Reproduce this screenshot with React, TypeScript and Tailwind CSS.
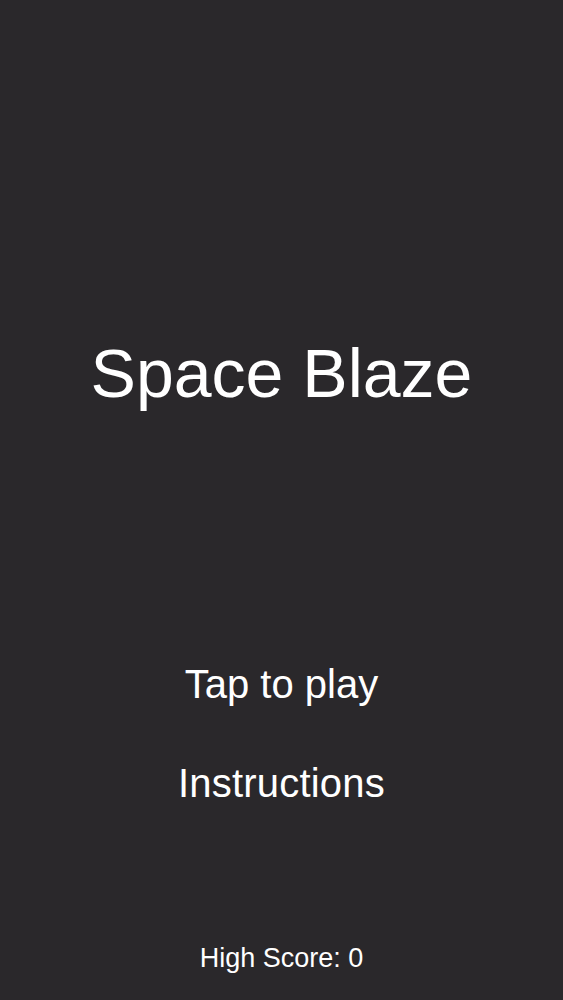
export default function App() {
  return (
    <div
      className="flex min-h-[1000px] w-full flex-col items-center bg-[#2a282b] pt-[339px] text-white"
      style={{ fontFamily: '"Liberation Sans", Arial, sans-serif' }}
    >
      {/* Title */}
      <h1 className="text-[68px] leading-none font-normal">Space Blaze</h1>

      {/* Menu */}
      <button className="mt-[257px] text-[40px] leading-none">Tap to play</button>
      <button className="mt-[59px] text-[40px] leading-none tracking-[0.2px]">Instructions</button>

      {/* Footer */}
      <p className="mt-[142px] text-[27px] leading-none">High Score: 0</p>
    </div>
  );
}
